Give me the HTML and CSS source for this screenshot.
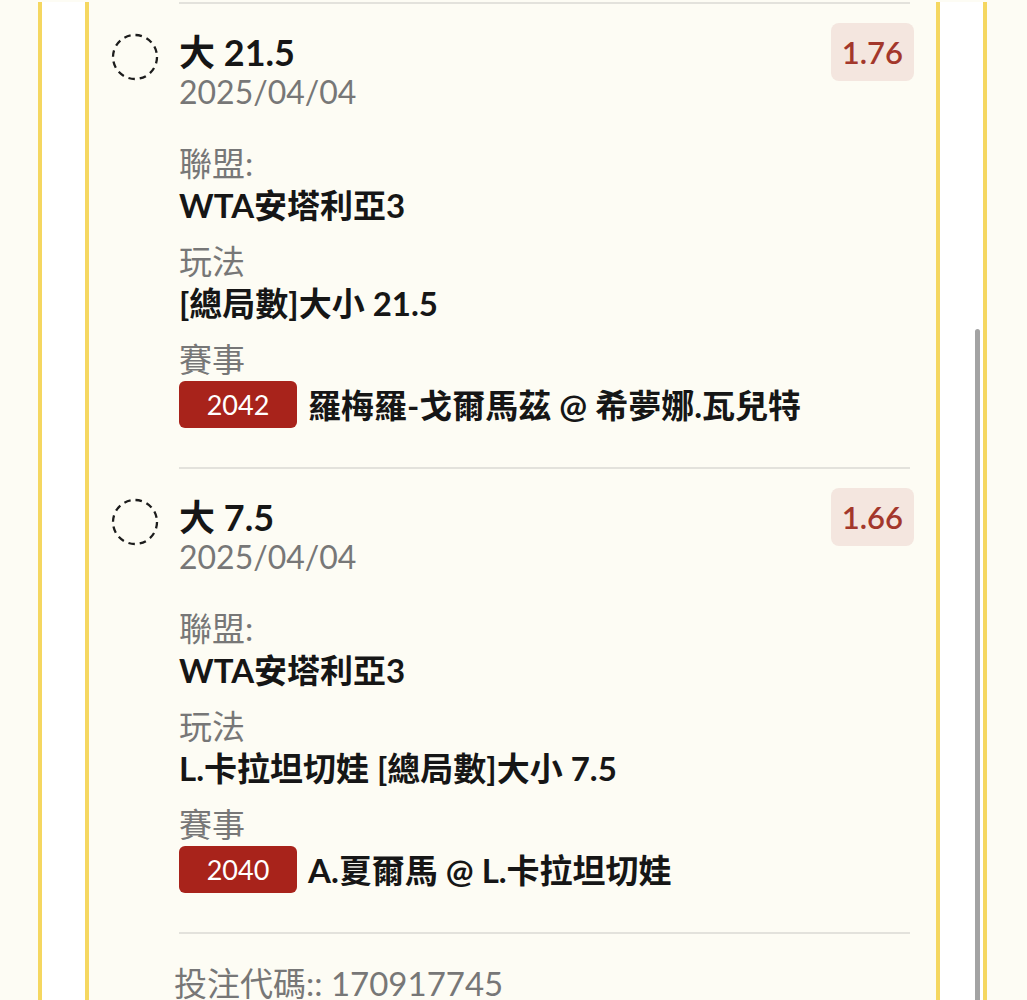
FILE: index.html
```html
<!DOCTYPE html>
<html lang="zh-Hant">
<head>
    <meta charset="UTF-8">
    <meta name="viewport" content="width=device-width, initial-scale=1.0">
    <title>投注單</title>
    <link rel="stylesheet" href="styles.css">
</head>
<body>
    <div class="frame">
        <div class="slip">
            <div class="rule"></div>

            <div class="leg">
                <svg class="check" viewBox="0 0 48 48"><circle cx="24" cy="24" r="22"/></svg>
                <div class="leg-body">
                    <div class="leg-head">
                        <div class="leg-title">
                            <div class="pick">大 21.5</div>
                            <div class="date">2025/04/04</div>
                        </div>
                        <span class="odds">1.76</span>
                    </div>
                    <div class="field">
                        <div class="label">聯盟:</div>
                        <div class="value">WTA安塔利亞3</div>
                    </div>
                    <div class="field">
                        <div class="label">玩法</div>
                        <div class="value">[總局數]大小 21.5</div>
                    </div>
                    <div class="field">
                        <div class="label">賽事</div>
                        <div class="event">
                            <span class="badge">2042</span>
                            <span class="value">羅梅羅-戈爾馬茲 @ 希夢娜.瓦兒特</span>
                        </div>
                    </div>
                </div>
            </div>

            <div class="rule"></div>

            <div class="leg">
                <svg class="check" viewBox="0 0 48 48"><circle cx="24" cy="24" r="22"/></svg>
                <div class="leg-body">
                    <div class="leg-head">
                        <div class="leg-title">
                            <div class="pick">大 7.5</div>
                            <div class="date">2025/04/04</div>
                        </div>
                        <span class="odds">1.66</span>
                    </div>
                    <div class="field">
                        <div class="label">聯盟:</div>
                        <div class="value">WTA安塔利亞3</div>
                    </div>
                    <div class="field">
                        <div class="label">玩法</div>
                        <div class="value">L.卡拉坦切娃 [總局數]大小 7.5</div>
                    </div>
                    <div class="field">
                        <div class="label">賽事</div>
                        <div class="event">
                            <span class="badge">2040</span>
                            <span class="value">A.夏爾馬 @ L.卡拉坦切娃</span>
                        </div>
                    </div>
                </div>
            </div>

            <div class="rule"></div>

            <p class="code">投注代碼:: 170917745</p>
        </div>

        <!-- overlay scrollbar -->
        <div class="scrollbar"></div>
    </div>
</body>
</html>
```

FILE: styles.css
```css
body {
    margin: 0;
    background-color: #fdfcf4;
    font-family: Lato, "Noto Sans CJK TC", sans-serif;
    font-size: 33px;
    line-height: 42px;
    color: #161616;
}
.frame {
    position: relative;
    box-sizing: border-box;
    width: 949px;
    min-height: 1000px;
    margin-left: 38px;
    padding: 0 43px;
    background-color: #fff;
    border-left: 4px solid #f5d760;
    border-right: 4px solid #f5d760;
}
.slip {
    min-height: 1000px;
    background-color: #fdfcf4;
    border-left: 4px solid #f5d760;
    border-right: 4px solid #f5d760;
}
.rule {
    height: 2px;
    margin: 0 26px 0 90px;
    background-color: #e3e2dc;
}
.slip > .rule:first-child {
    margin-top: 2px;
}
.leg {
    display: flex;
    padding: 19px 22px 39px 23px;
}
.check {
    flex: none;
    width: 48px;
    height: 48px;
    margin: 10px 20px 0 -1px;
}
.check circle {
    fill: none;
    stroke: #1c1c1c;
    stroke-width: 2.3;
    stroke-dasharray: 6.5 5;
}
.leg-body {
    flex: 1;
}
.leg-head {
    display: flex;
    justify-content: space-between;
    align-items: flex-start;
}
.leg-title {
    margin-top: 9px;
    line-height: 40px;
}
.pick {
    font-size: 36px;
    font-weight: 700;
}
.date {
    font-size: 32px;
    color: #777;
}
.odds {
    padding: 8px 11px;
    border-radius: 8px;
    background-color: #f4e6df;
    color: #a3372b;
    font-size: 31px;
    font-weight: 600;
}
.field {
    margin-top: 14px;
}
.leg-head + .field {
    margin-top: 30px;
}
.label {
    color: #777;
}
.value {
    font-weight: 700;
}
.event {
    display: flex;
    align-items: center;
    gap: 11px;
    margin-top: 1px;
}
.badge {
    display: inline-flex;
    align-items: center;
    justify-content: center;
    width: 118px;
    height: 47px;
    border-radius: 6px;
    background-color: #a8231b;
    color: #fff;
    font-size: 27px;
}
.code {
    margin: 28px 0 0 85px;
    color: #777;
}
.scrollbar {
    position: absolute;
    top: 327px;
    bottom: 0;
    right: 3px;
    width: 5px;
    border-radius: 3px 3px 0 0;
    background-color: #a3a3a3;
}
```
